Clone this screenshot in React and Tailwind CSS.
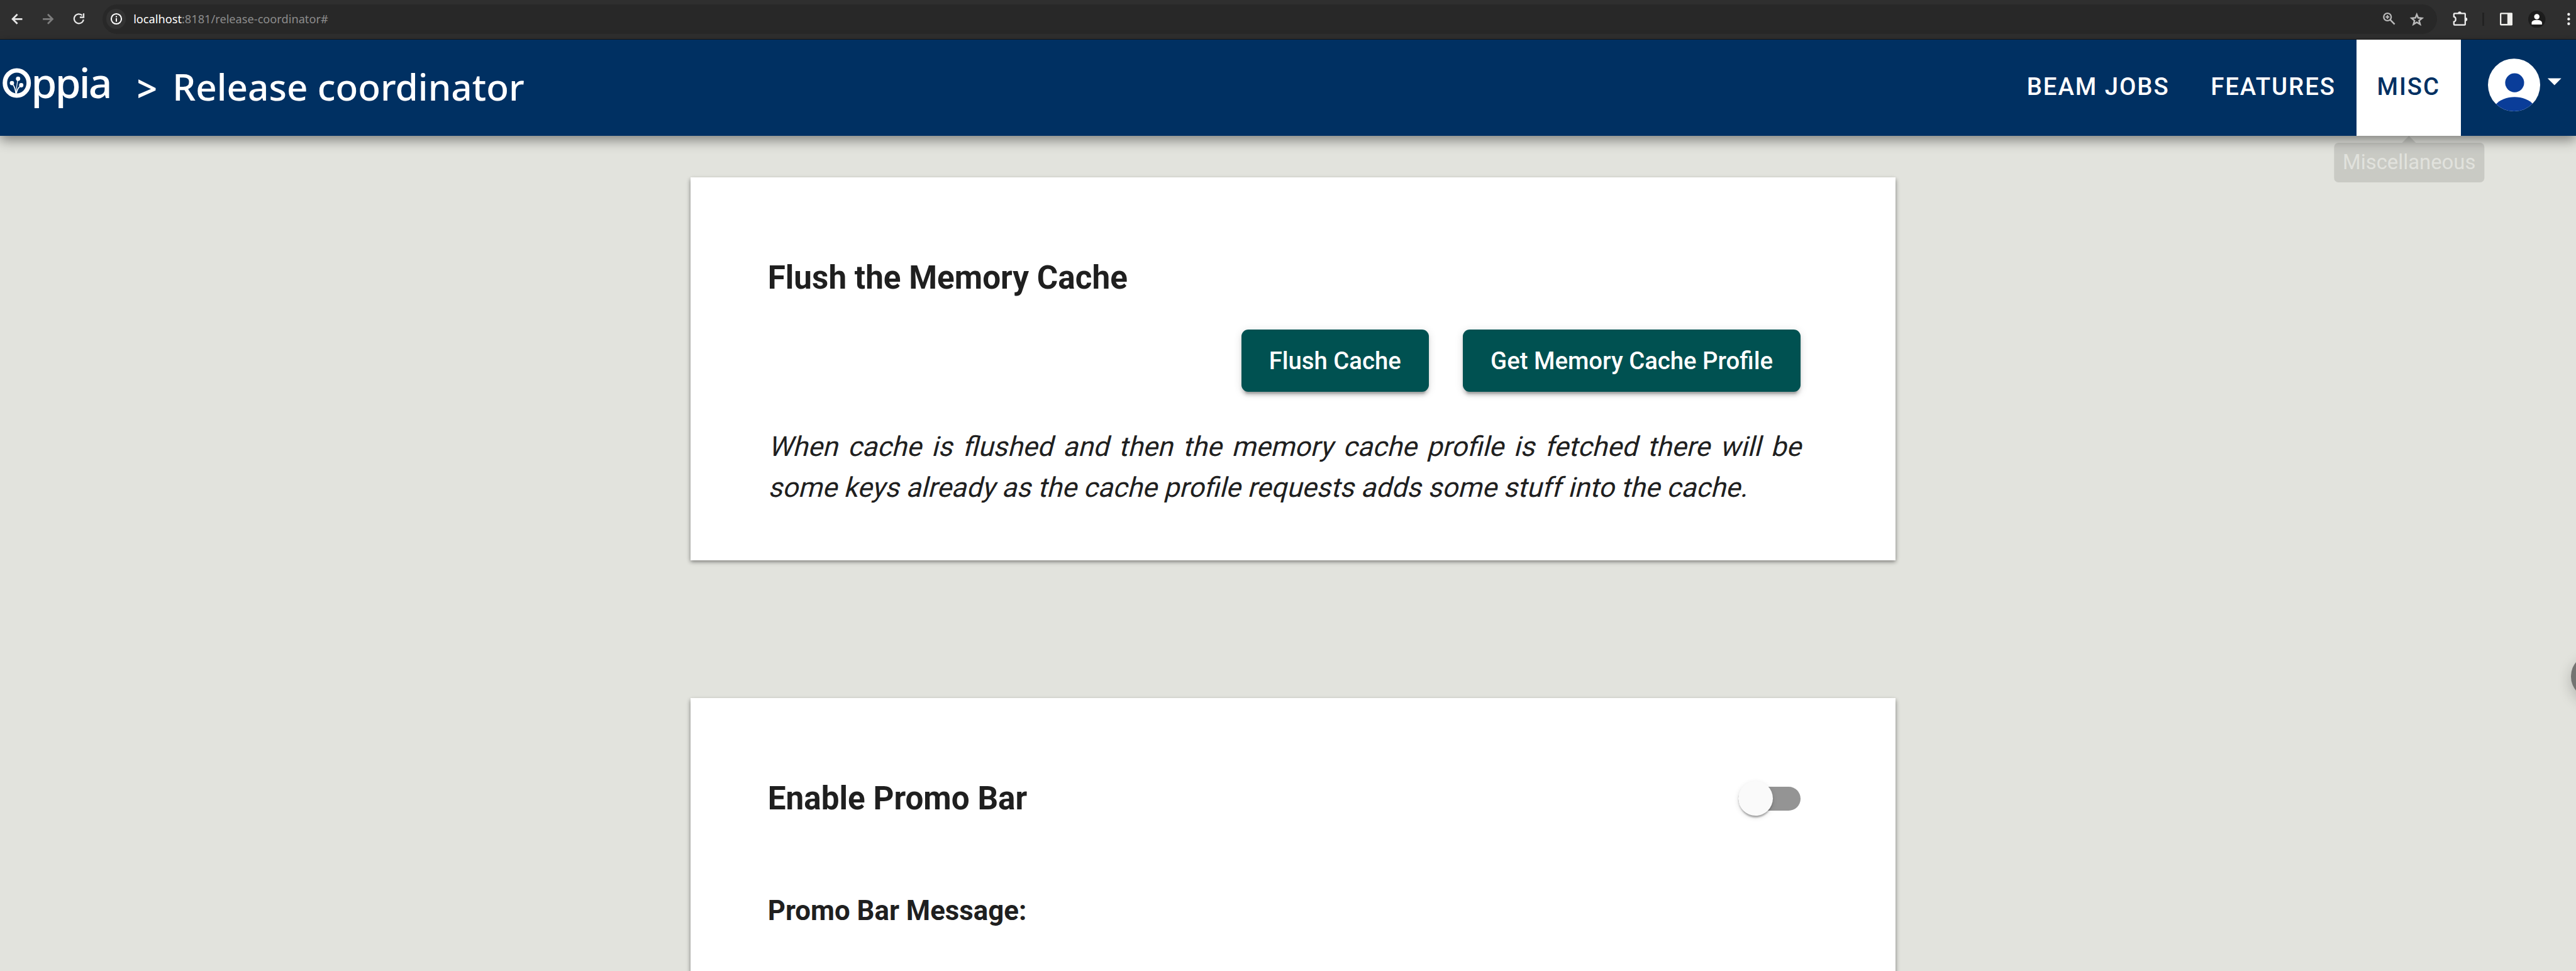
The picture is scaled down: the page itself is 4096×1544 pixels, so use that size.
import React from "react";

function ArrowIcon({ className = "" }) {
  return (
    <svg viewBox="0 0 24 24" className={"h-[24.6px] w-[24.6px] " + className} fill="none" stroke="currentColor" strokeWidth="2.700">
      <path d="M20 12H5.500M12.300 4.700L5 12L12.300 19.300" />
    </svg>
  );
}

function ReloadIcon() {
  return (
    <svg viewBox="506 88 92 88" className="h-[20px] w-[21px]">
      <path d="M584 137 A33 33 0 1 1 575 108" fill="none" stroke="#e6e6e6" strokeWidth="10" />
      <path d="M590 94 V126 H558 V116 H580 V94 Z" fill="#e6e6e6" />
    </svg>
  );
}

function InfoIcon() {
  return (
    <svg viewBox="0 0 24 24" className="h-[22px] w-[22px]">
      <circle cx="12" cy="12" r="8.8" fill="none" stroke="#fff" strokeWidth="2.2" />
      <path d="M10.9 11h2.2v6h-2.2zM10.9 7h2.2v2.2h-2.2z" fill="#fff" />
    </svg>
  );
}

function ZoomIcon() {
  return (
    <svg viewBox="108 85 95 95" className="h-[21.7px] w-[21.7px]" fill="none" stroke="#b9b9b9" strokeWidth="10">
      <circle cx="144" cy="120" r="26" />
      <path d="M163 139 L194 171" strokeWidth="11" />
      <path d="M144 107V133M131 120H157" strokeWidth="9" />
    </svg>
  );
}

function StarIcon() {
  return (
    <svg viewBox="296 80 104 100" className="h-[22.8px] w-[23.7px]" fill="none" stroke="#b9b9b9" strokeWidth="11">
      <path d="M348 98 L357.500 121 L384 124 L364 141 L371 166 L348 152.500 L325 166 L332 141 L312 124 L338.500 121 Z" />
    </svg>
  );
}

function PuzzleIcon() {
  return (
    <svg viewBox="600 72 108 110" className="h-[25.1px] w-[24.6px]">
      <path
        d="M608 96 Q608 91 613 91 H684 Q687 91 687 95 V167 Q687 171 683 171 H613 Q608 171 608 166 V149 C625 147 625 116 608 114 Z"
        fill="none"
        stroke="#efefef"
        strokeWidth="10"
      />
      <path d="M636 90 A12.500 13 0 0 1 661 90 ZM689 119 A13 13 0 0 1 689 145 Z" fill="#efefef" />
    </svg>
  );
}

function PanelIcon() {
  return (
    <svg viewBox="928 88 89 91" className="h-[20.7px] w-[20.3px]">
      <path
        fillRule="evenodd"
        fill="#f0efec"
        d="M936 89H1009Q1017 89 1017 97V170Q1017 178 1009 178H936Q928 178 928 170V97Q928 89 936 89ZM938 99V167H980V99Z"
      />
    </svg>
  );
}

function BrowserBar() {
  return (
    <div className="flex h-[63px] items-center border-b-[1.4px] border-[#181818] bg-[#2f2f2f] pb-[1.500px] pl-[2.800px] font-['Noto_Sans',sans-serif]">
      <div className="flex h-full w-[147.600px] shrink-0 items-center">
        <div className="flex w-[49.200px] justify-center text-[#e6e6e6]"><ArrowIcon /></div>
        <div className="flex w-[49.200px] justify-center text-[#7d7d7d]"><ArrowIcon className="rotate-180" /></div>
        <div className="flex w-[49.200px] justify-center"><ReloadIcon /></div>
      </div>
      <div className="ml-[12.400px] flex h-[46.600px] w-[3712px] shrink-0 items-center rounded-full bg-[#282828] pl-[5.900px] pr-[20.300px]">
        <div className="flex size-[31.800px] items-center justify-center rounded-full bg-[#333333]"><InfoIcon /></div>
        <div className="ml-[11.700px] text-[18.200px] leading-none text-[#8c8c8c]">
          <span className="text-white">localhost</span>:8181/release-coordinator#
        </div>
        <div className="ml-auto flex items-center gap-[21.200px]">
          <ZoomIcon />
          <StarIcon />
        </div>
      </div>
      <div className="ml-[25.300px] -mt-[2px]"><PuzzleIcon /></div>
      <div className="ml-[22px] h-[21.500px] w-[3px] bg-[#222222]" />
      <div className="ml-[25.200px]"><PanelIcon /></div>
      <svg viewBox="0 0 40 40" className="ml-[25.300px] size-[27.400px] shrink-0">
        <circle cx="20" cy="20" r="20" fill="#1c1c1c" />
        <circle cx="20" cy="14" r="6.200" fill="#fff" />
        <path d="M8 32 V28 C8 19.500 32 19.500 32 28 V32 Z" fill="#fff" />
      </svg>
      <svg viewBox="0 0 10 30" className="ml-[32.800px] h-[20.500px] w-[6.800px] shrink-0" fill="#f0f0f0">
        <circle cx="5" cy="4" r="3.200" />
        <circle cx="5" cy="15" r="3.200" />
        <circle cx="5" cy="26" r="3.200" />
      </svg>
    </div>
  );
}

function Logo() {
  return (
    <div className="flex h-full w-[217.600px] shrink-0 items-center pb-[18.800px] pl-[2.700px]">
      <svg viewBox="12 470 210 220" className="mt-[3.200px] h-[50.200px] w-[47.900px] shrink-0">
        <ellipse cx="116" cy="579.500" rx="83" ry="88" fill="none" stroke="#fff" strokeWidth="31" />
        <g fill="#fff">
          <circle cx="125" cy="550" r="15" />
          <circle cx="82" cy="580" r="15" />
          <circle cx="147" cy="595" r="15" />
        </g>
        <g fill="none" stroke="#fff" strokeWidth="5">
          <path d="M123 555 C118 590 112 610 111 652" />
          <path d="M88 588 C100 605 107 625 109 652" strokeWidth="7" />
          <path d="M140 602 C122 615 116 635 113 652" strokeWidth="7" />
        </g>
      </svg>
      <span className="-ml-[1px] text-[66px] font-medium leading-none tracking-[-2.800px]">ppia</span>
    </div>
  );
}

function Navbar() {
  const tab = "flex h-full items-center px-[32.840px] pb-[3.400px] text-[38.300px] font-medium leading-none tracking-[1.950px]";
  return (
    <nav className="relative z-10 flex h-[153.300px] bg-[#003062] text-white shadow-[0_7px_18px_rgba(0,0,0,0.43)]">
      <div className="flex h-full items-center font-['Noto_Sans',sans-serif]">
        <Logo />
        <div className="w-[56.600px] shrink-0 pt-[2px] text-[57px] font-semibold leading-none">&gt;</div>
        <h1 className="whitespace-nowrap pb-[4.400px] text-[58.500px] font-medium leading-none">Release coordinator</h1>
      </div>
      <div className="ml-auto flex h-full font-[Roboto,sans-serif]">
        <div className={tab}>BEAM JOBS</div>
        <div className={tab}>FEATURES</div>
        <div className="relative h-full bg-white text-[#003062]">
          <div className={tab}>MISC</div>
          <div className="absolute left-1/2 top-full ml-[1px] flex -translate-x-1/2 flex-col items-center">
            <div className="h-0 w-0 border-x-[11px] border-b-[11px] border-x-transparent border-b-black/[0.11]" />
            <div className="flex h-[62.900px] items-center rounded-[7px] bg-black/[0.11] px-[14px] text-[32.840px] leading-none text-[#e1e2dd]">
              Miscellaneous
            </div>
          </div>
        </div>
        <div className="flex w-[183.300px] items-center pb-[9.500px] pl-[42.300px]">
          <svg viewBox="840 400 520 380" className="h-[86.700px] w-[118.600px]">
            <defs>
              <clipPath id="avatar"><ellipse cx="1026.500" cy="589" rx="182" ry="184" /></clipPath>
            </defs>
            <g clipPath="url(#avatar)">
              <rect x="840" y="400" width="380" height="380" fill="#fff" />
              <circle cx="1030.500" cy="573.500" r="66" fill="#0a3d99" />
              <path d="M896 728 C955 654 1105 654 1164 728 V780 H896 Z" fill="#0a3d99" />
            </g>
            <path d="M1260 543 H1356 L1308 591 Z" fill="#fff" />
          </svg>
        </div>
      </div>
    </nav>
  );
}

function Card({ className, children }) {
  return (
    <section
      className={
        "w-[1916px] bg-white pl-[123.200px] pr-[150.700px] shadow-[0_2.700px_8.200px_rgba(0,0,0,0.2),0_2.700px_5.500px_rgba(0,0,0,0.3)] " + className
      }
    >
      {children}
    </section>
  );
}

function Button({ children }) {
  return (
    <button className="flex h-[98.500px] items-center rounded-[11px] bg-[#005151] px-[43.800px] text-[38.300px] font-medium leading-none text-white shadow-[0_8.200px_2.700px_-5.500px_rgba(0,0,0,0.2),0_5.500px_5.500px_rgba(0,0,0,0.14),0_2.700px_13.700px_rgba(0,0,0,0.12)]">
      {children}
    </button>
  );
}

export default function App() {
  return (
    <div className="relative h-[1544px] w-[4096px] overflow-hidden bg-[#e2e3dd]">
      <BrowserBar />
      <Navbar />
      <main className="ml-[1097.500px] font-[Roboto,sans-serif] text-[#1f1f1f]">
        <Card className="mt-[65.500px] h-[609px] pt-[129.700px]">
          <h2 className="text-[51.240px] font-bold leading-[61.500px]">Flush the Memory Cache</h2>
          <div className="mt-[51.500px] flex justify-end gap-[54.700px]">
            <Button>Flush Cache</Button>
            <Button>Get Memory Cache Profile</Button>
          </div>
          <div className="mt-[54.800px] whitespace-nowrap text-[43.800px] leading-[65.700px]">
            <p className="origin-[0_73%] -skew-x-[14deg] [text-align-last:justify]">
              When cache is flushed and then the memory cache profile is fetched there will be
            </p>
            <p className="origin-[0_73%] -skew-x-[14deg]">
              some keys already as the cache profile requests adds some stuff into the cache.
            </p>
          </div>
        </Card>
        <Card className="mt-[219.100px] h-[700px] pt-[128.300px]">
          <div className="flex items-center justify-between">
            <h2 className="text-[51.240px] font-bold leading-[63px]">Enable Promo Bar</h2>
            <div className="flex h-[38.300px] w-[98.500px] items-center rounded-full bg-[#949494]">
              <div className="size-[54.700px] shrink-0 rounded-full bg-[#fafafa] shadow-[0_5.500px_2.700px_-2.700px_rgba(0,0,0,0.2),0_2.700px_2.700px_rgba(0,0,0,0.14),0_2.700px_8.200px_rgba(0,0,0,0.12)]" />
            </div>
          </div>
          <h3 className="mt-[120.500px] text-[43.800px] font-bold leading-[52.600px]">Promo Bar Message:</h3>
        </Card>
      </main>
      <div className="absolute left-[4088px] top-[1041.200px] size-[68.400px] rounded-full bg-[#747472] shadow-[0_8px_22px_rgba(0,0,0,0.22)]" />
    </div>
  );
}
